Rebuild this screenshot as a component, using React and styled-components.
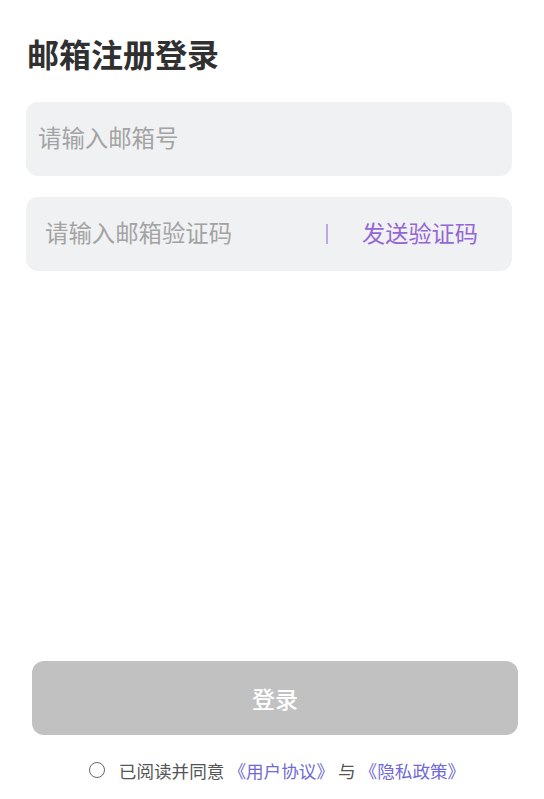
import React, { useState } from 'react'
import styled, { createGlobalStyle } from 'styled-components'

const GlobalStyle = createGlobalStyle`
    * {
        box-sizing: border-box;
    }

    body {
        margin: 0;
        background: #fff;
        font-family: "Noto Sans CJK SC", "Noto Sans", sans-serif;
    }
`

const Page = styled.div`
    height: 100vh;
    display: flex;
    flex-direction: column;
    padding: 34px 0 17px 0;
    background: #fff;
`

const Title = styled.h1`
    margin: 0 0 30px 27px;
    font-size: 32px;
    line-height: 38px;
    font-weight: 700;
    color: #303030;
`

const Form = styled.div`
    display: flex;
    flex-direction: column;
    gap: 21px;
    padding: 0 32px 0 26px;
`

const Field = styled.div`
    height: 74px;
    display: flex;
    align-items: center;
    padding: 0 34px 5px ${props => props.inset}px;
    border-radius: 12px;
    background: #f0f1f3;
`

const Input = styled.input`
    flex: 1;
    min-width: 0;
    border: none;
    outline: none;
    background: transparent;
    padding: 0;
    font-family: inherit;
    font-size: 23.4px;
    line-height: 30px;
    color: #333;

    &::placeholder {
        color: #a3a3a3;
    }
`

const Divider = styled.span`
    flex-shrink: 0;
    width: 2px;
    height: 20px;
    margin: 4px 34px 0 0;
    background: #bfa6e8;
`

const SendCode = styled.button`
    border: none;
    background: none;
    padding: 0;
    font-family: inherit;
    font-size: 23.2px;
    line-height: 30px;
    color: #9466d6;
    cursor: pointer;
`

const Footer = styled.div`
    margin-top: auto;
    display: flex;
    flex-direction: column;
    align-items: center;
    gap: 23px;
`

const LoginBtn = styled.button`
    width: 486px;
    height: 74px;
    margin-left: 6px;
    border: none;
    border-radius: 12px;
    background: #c1c1c1;
    color: #fff;
    font-family: inherit;
    font-size: 23px;
    font-weight: 500;
    cursor: pointer;
`

const Agreement = styled.div`
    display: flex;
    align-items: center;
    height: 24px;
    margin-left: 14px;
    font-size: 17.6px;
    color: #555;
`

const Radio = styled.span`
    width: 16px;
    height: 16px;
    margin-right: 14px;
    border-radius: 50%;
    border: 1.5px solid ${props => props.checked ? '#9466d6' : '#666'};
    background: ${props => props.checked ? '#9466d6' : 'transparent'};
    cursor: pointer;
`

const Link = styled.span`
    margin: 0 4px;
    color: #6f6ad4;
`

const App = () => {
    const [agreed, setAgreed] = useState(false)

    return (
        <Page>
            <GlobalStyle />
            <Title>邮箱注册登录</Title>
            <Form>
                <Field inset={12}>
                    <Input type="text" placeholder="请输入邮箱号" />
                </Field>
                <Field inset={19}>
                    <Input type="text" placeholder="请输入邮箱验证码" />
                    <Divider />
                    <SendCode type="button">发送验证码</SendCode>
                </Field>
            </Form>
            <Footer>
                <LoginBtn type="button">登录</LoginBtn>
                <Agreement>
                    <Radio checked={agreed} onClick={() => setAgreed(!agreed)} />
                    已阅读并同意<Link>《用户协议》</Link>与<Link>《隐私政策》</Link>
                </Agreement>
            </Footer>
        </Page>
    )
}

export default App
